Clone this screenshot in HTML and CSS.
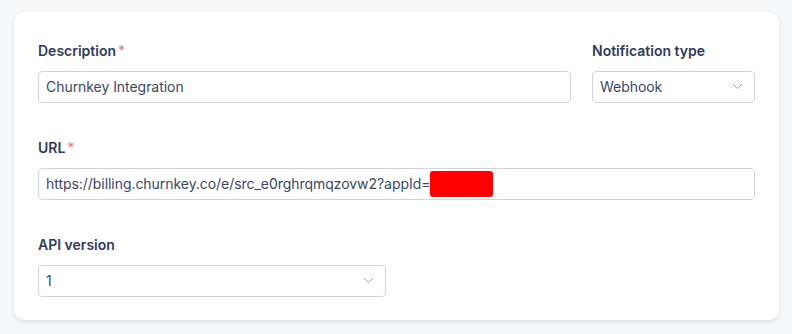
FILE: index.html
```html
<!DOCTYPE html>
<html lang="en">
<head>
    <meta charset="UTF-8">
    <title>Webhook settings</title>
    <link rel="stylesheet" href="styles.css">
</head>
<body>

<div class="card">
    <!-- Description + type -->
    <div class="row">
        <div class="field field-grow">
            <label class="label">Description<span class="req">*</span></label>
            <div class="input">Churnkey Integration</div>
        </div>
        <div class="field field-type">
            <label class="label">Notification type</label>
            <div class="input select">
                <span>Webhook</span>
                <svg class="chevron" width="11" height="7" viewBox="0 0 11 7"><path d="M1 1l4.5 4.5L10 1" fill="none" stroke="#9aa1b4" stroke-width="1"/></svg>
            </div>
        </div>
    </div>

    <!-- URL -->
    <div class="field">
        <label class="label">URL<span class="req">*</span></label>
        <div class="input">https://billing.churnkey.co/e/src_e0rghrqmqzovw2?appId=<span class="redacted"></span></div>
    </div>

    <!-- API version -->
    <div class="field field-api">
        <label class="label">API version</label>
        <div class="input select">
            <span>1</span>
            <svg class="chevron" width="11" height="7" viewBox="0 0 11 7"><path d="M1 1l4.5 4.5L10 1" fill="none" stroke="#9aa1b4" stroke-width="1"/></svg>
        </div>
    </div>
</div>

</body>
</html>
```
FILE: styles.css
```css
* {
    margin: 0;
    padding: 0;
    box-sizing: border-box;
}
body {
    font-family: 'Inter', sans-serif;
    background-color: #f7f8fa;
    color: #2f3b5c;
    padding: 12px 13px 14px 14px;
}
.card {
    background-color: #fff;
    border-radius: 10px;
    box-shadow: 0 2px 4px rgba(40, 50, 80, 0.12);
    padding: 30px 24px 24px 24px;
    display: flex;
    flex-direction: column;
    gap: 36.5px;
    height: 308px;
}
.row {
    display: flex;
    gap: 21px;
}
.field {
    display: flex;
    flex-direction: column;
    gap: 11px;
}
.field-grow {
    flex: 1;
}
.field-type {
    width: 163px;
}
.field-api {
    width: 348px;
}
.label {
    font-size: 14px;
    font-weight: 600;
    line-height: 18px;
    color: #2f3b5c;
}
.req {
    color: #f07575;
    font-weight: 400;
    margin-left: 2px;
}
.input {
    height: 31.5px;
    border: 1px solid #d3d5de;
    border-radius: 4px;
    padding: 0 7px;
    display: flex;
    align-items: center;
    font-size: 14px;
    letter-spacing: -0.05px;
    color: #3b4767;
    background: #fff;
}
.select {
    justify-content: space-between;
    padding-right: 11px;
}
.redacted {
    display: inline-block;
    width: 63px;
    height: 26px;
    background: #ff0000;
    border-radius: 3px;
}
```
